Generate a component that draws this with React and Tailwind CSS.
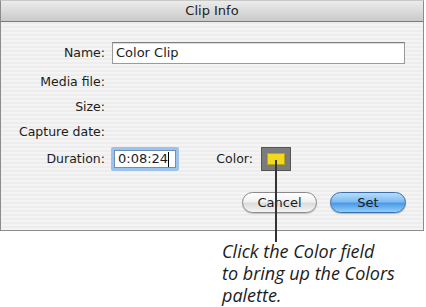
import React from 'react';

const stripes =
  'bg-[repeating-linear-gradient(180deg,#ededed_0px,#ededed_2px,#f4f4f4_2px,#f4f4f4_4px)]';

const Label = ({ children, className = '' }) => (
  <div className={`w-[104px] shrink-0 text-right ${className}`}>{children}</div>
);

const App = () => {
  return (
    <div className="relative w-[426px] h-[307px] bg-white overflow-hidden font-['DejaVu_Sans',sans-serif] text-[12.5px] text-[#1c1c1c]">
      <div className="w-[424px] border border-[#8c8c8c] border-t-[#c8c8c8] flex flex-col">
        <div className="h-[21px] flex items-center justify-center bg-[linear-gradient(180deg,#ececec_0%,#d9d9d9_55%,#c9c9c9_100%)] border-b border-[#7b7b7b] text-[13px] text-[#222]">
          Clip Info
        </div>
        <div className={`${stripes} flex flex-col pt-[20px] pb-[17px]`}>
          <div className="flex items-center h-[22px]">
            <Label>Name:</Label>
            <div className="ml-[7px] w-[293px] h-[22px] bg-white border border-[#9a9a9a] border-t-[#7d7d7d] shadow-[inset_0_1px_1px_rgba(0,0,0,0.15)] flex items-center pl-[3px] text-[13px]">
              Color Clip
            </div>
          </div>
          <div className="mt-[6px] flex items-center h-[25px]">
            <Label>Media file:</Label>
          </div>
          <div className="flex items-center h-[25px]">
            <Label>Size:</Label>
          </div>
          <div className="flex items-center h-[25px]">
            <Label>Capture date:</Label>
          </div>
          <div className="mt-[2px] flex items-center h-[24px]">
            <Label>Duration:</Label>
            <div className="ml-[6px] w-[68px] h-[24px] rounded-[2px] border-[3px] border-[#9cc3ec] flex items-center">
              <div className="w-full h-full bg-white border border-[#6d8fb8] flex items-center pl-[3px] text-[13px]">
                0:08:24<span className="w-px h-[15px] bg-black" />
              </div>
            </div>
            <div className="w-[74px] text-right">Color:</div>
            <div className="ml-[8px] w-[30px] h-[24px] bg-[#7b7b7b] border border-[#555] flex items-center justify-center">
              <div className="w-[18px] h-[12px] bg-[#f2d91c] border border-[#b9a516]" />
            </div>
          </div>
          <div className="mt-[21px] flex h-[21px] pl-[241px] gap-[13px]">
            <div className="w-[75px] h-[21px] rounded-full border border-[#8a8a8a] bg-[linear-gradient(180deg,#ffffff_0%,#f2f2f2_45%,#dcdcdc_55%,#f4f4f4_100%)] flex items-center justify-center text-[13px] shadow-[0_1px_1px_rgba(0,0,0,0.2)]">
              Cancel
            </div>
            <div className="w-[76px] h-[21px] rounded-full border border-[#3a6ea8] bg-[linear-gradient(180deg,#b7dcfb_0%,#7ebcf2_45%,#4d9ae6_55%,#8fd0fb_100%)] flex items-center justify-center text-[13px] shadow-[0_1px_1px_rgba(0,0,0,0.25)]">
              Set
            </div>
          </div>
        </div>
      </div>
      <div className="pl-[222px] mt-[9px] font-['Open_Sans',sans-serif] italic text-[18px] leading-[22px] text-[#1c1c1c]">
        <div>Click the Color field</div>
        <div>to bring up the Colors</div>
        <div>palette.</div>
      </div>
      <div className="absolute left-[275px] top-[160px] w-[2px] h-[82px] bg-[#333]" />
    </div>
  );
};

export default App;
